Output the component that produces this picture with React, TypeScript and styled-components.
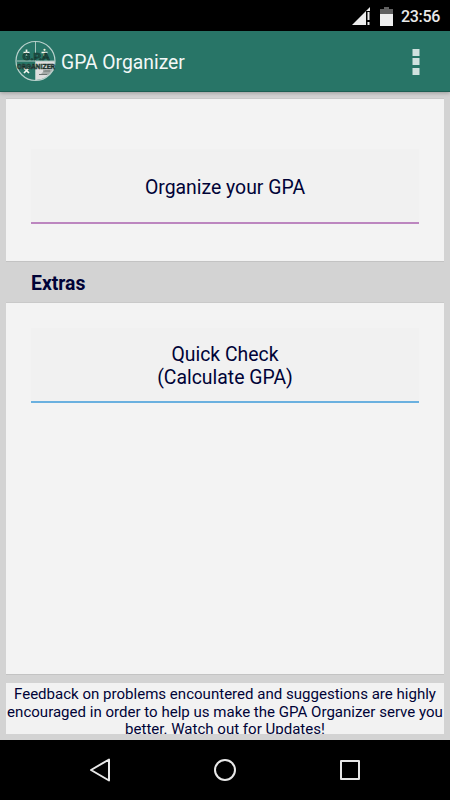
import React from "react";
import styled, { createGlobalStyle } from "styled-components";

const GlobalStyle = createGlobalStyle`
  * { box-sizing: border-box; }
  body { margin: 0; background: #000; font-family: Roboto, "Noto Sans", sans-serif; }
`;

const Screen = styled.div`
  width: 450px;
  height: 800px;
  display: flex;
  flex-direction: column;
  overflow: hidden;
  background: #d3d3d3;
  color: #000337;
`;

const StatusBar = styled.header`
  height: 31px;
  flex: none;
  display: flex;
  align-items: center;
  justify-content: flex-end;
  padding: 1px 10px 0 0;
  background: #000;
`;

const SignalIcon = styled.svg`
  width: 18px;
  height: 18px;
  margin-right: 10px;
`;

const BatteryIcon = styled.svg`
  width: 13px;
  height: 19px;
  margin-right: 8px;
`;

const Clock = styled.span`
  padding-top: 1px;
  font-size: 16px;
  font-weight: 500;
  line-height: 29px;
  letter-spacing: -0.3px;
  color: #e9e9e9;
`;

const AppBar = styled.div`
  height: 61px;
  flex: none;
  display: flex;
  align-items: center;
  padding: 0 30px 0 15px;
  background: #287567;
  border-bottom: 1px solid #1d5f53;
  box-shadow: 0 1px 4px rgba(0, 0, 0, 0.28);
`;

const Logo = styled.svg`
  width: 42px;
  height: 42px;
  flex: none;
`;

const Title = styled.h1`
  margin: 3px auto 0 4px;
  font-size: 19.3px;
  font-weight: 400;
  line-height: 28px;
  color: #f3f8f7;
`;

const Overflow = styled.svg`
  width: 8px;
  height: 28px;
  margin-top: 2px;
`;

const Content = styled.main`
  flex: 1;
  min-height: 0;
  display: flex;
  flex-direction: column;
  padding: 7px 6px 6px;
`;

const Card = styled.section<{ $height: number; $top: number }>`
  height: ${(p) => p.$height}px;
  flex: none;
  padding: ${(p) => p.$top}px 25px 0;
  background: #f3f3f3;
  box-shadow: 0 1px 0 #c3c3c3, 0 -1px 0 #c9c9c9;
`;

const ActionButton = styled.button<{ $line: string; $nudge: number }>`
  display: flex;
  align-items: center;
  justify-content: center;
  width: 388px;
  height: 75px;
  padding: ${(p) => p.$nudge}px 0 0;
  border: 0;
  border-bottom: 2px solid ${(p) => p.$line};
  background: #f1f1f1;
  color: inherit;
  font: 400 19.4px/23px Roboto, "Noto Sans", sans-serif;
  white-space: pre-line;
`;

const SectionTitle = styled.h2`
  height: 42px;
  flex: none;
  margin: 0;
  padding: 2px 0 0 25px;
  font-size: 19.4px;
  font-weight: 700;
  line-height: 42px;
`;

const Feedback = styled.p`
  height: 51px;
  margin: 9px 0 0;
  padding-top: 3px;
  overflow: hidden;
  background: #f2f2f2;
  font-size: 15.05px;
  line-height: 17.5px;
  text-align: center;
  white-space: pre;
`;

const NavBar = styled.nav`
  height: 60px;
  flex: none;
  display: flex;
  align-items: center;
  justify-content: space-between;
  padding: 0 88px;
  background: #000;
`;

const NavIcon = styled.svg`
  width: 24px;
  height: 24px;
  fill: none;
  stroke: #e8e8e8;
  stroke-width: 2;
  stroke-linejoin: round;
`;

const LogoMark = () => (
  <Logo viewBox="0 0 42 42">
    <path d="M21 21H40A19 19 0 0 1 21 40Z" fill="#dedede" />
    <path d="M25 35l5-5h9l-4 5z" fill="#a5aaa8" />
    <path d="M24 34.5h8M28 31h7" stroke="#6b7471" strokeWidth="1" />
    <circle cx="20.5" cy="21" r="19.5" fill="none" stroke="#b9d1cc" strokeWidth="1.2" />
    <path d="M20.5 2V40M2 21H40" stroke="#a9c6bf" strokeWidth="1" />
    <path d="M8.5 12.5h6M11.5 9.5v6M26.5 12.5h6M9 28l5 5M14 28l-5 5" stroke="#f4f7ef" strokeWidth="1.7" />
    <circle cx="29.5" cy="9.8" r="1.1" fill="#f4f0d8" />
    <circle cx="29.5" cy="15.2" r="1.1" fill="#f4f0d8" />
    <text x="7.5" y="19.5" textLength="27" lengthAdjust="spacingAndGlyphs" fontSize="9" fontWeight="700" fontFamily="Roboto, sans-serif" fill="#205d51" stroke="#16372f" strokeWidth=".6">G.P.A</text>
    <text x="2" y="29" textLength="38" lengthAdjust="spacingAndGlyphs" fontSize="8" fontWeight="700" fontFamily="Roboto, sans-serif" fill="#4a6a62" stroke="#172b26" strokeWidth=".5">ORGANIZER</text>
  </Logo>
);

export default function App() {
  return (
    <>
      <GlobalStyle />
      <Screen>
        <StatusBar>
          <SignalIcon viewBox="0 0 18 18">
            <path d="M0 18L18 0V4H14V18Z" fill="#ececec" />
            <path d="M15.5 5H17.5V13H15.5ZM15.5 15H17.5V18H15.5Z" fill="#ececec" />
          </SignalIcon>
          <BatteryIcon viewBox="0 0 13 19">
            <path d="M4 0H9V2H13V7H0V2H4Z" fill="#606060" />
            <path d="M0 7H13V19H0Z" fill="#eee" />
          </BatteryIcon>
          <Clock>23:56</Clock>
        </StatusBar>
        <AppBar>
          <LogoMark />
          <Title>GPA Organizer</Title>
          <Overflow viewBox="0 0 8 28" fill="#d0e1de">
            <rect x=".5" y="1" width="7" height="7" />
            <rect x=".5" y="10" width="7" height="7" />
            <rect x=".5" y="20" width="7" height="7" />
          </Overflow>
        </AppBar>
        <Content>
          <Card $height={162} $top={50}>
            <ActionButton $line="#bc86bf" $nudge={4}>Organize your GPA</ActionButton>
          </Card>
          <SectionTitle>Extras</SectionTitle>
          <Card $height={371} $top={25}>
            <ActionButton $line="#6ab0df" $nudge={2}>{"Quick Check\n(Calculate GPA)"}</ActionButton>
          </Card>
          <Feedback>
            {"Feedback on problems encountered and suggestions are highly\nencouraged in order to help us make the GPA Organizer serve you\nbetter. Watch out for Updates!"}
          </Feedback>
        </Content>
        <NavBar>
          <NavIcon viewBox="0 0 24 24"><path d="M3 12L21 1.5V22.5Z" /></NavIcon>
          <NavIcon viewBox="0 0 24 24"><circle cx="12" cy="12" r="10" /></NavIcon>
          <NavIcon viewBox="0 0 24 24"><rect x="3" y="3" width="18" height="18" /></NavIcon>
        </NavBar>
      </Screen>
    </>
  );
}
